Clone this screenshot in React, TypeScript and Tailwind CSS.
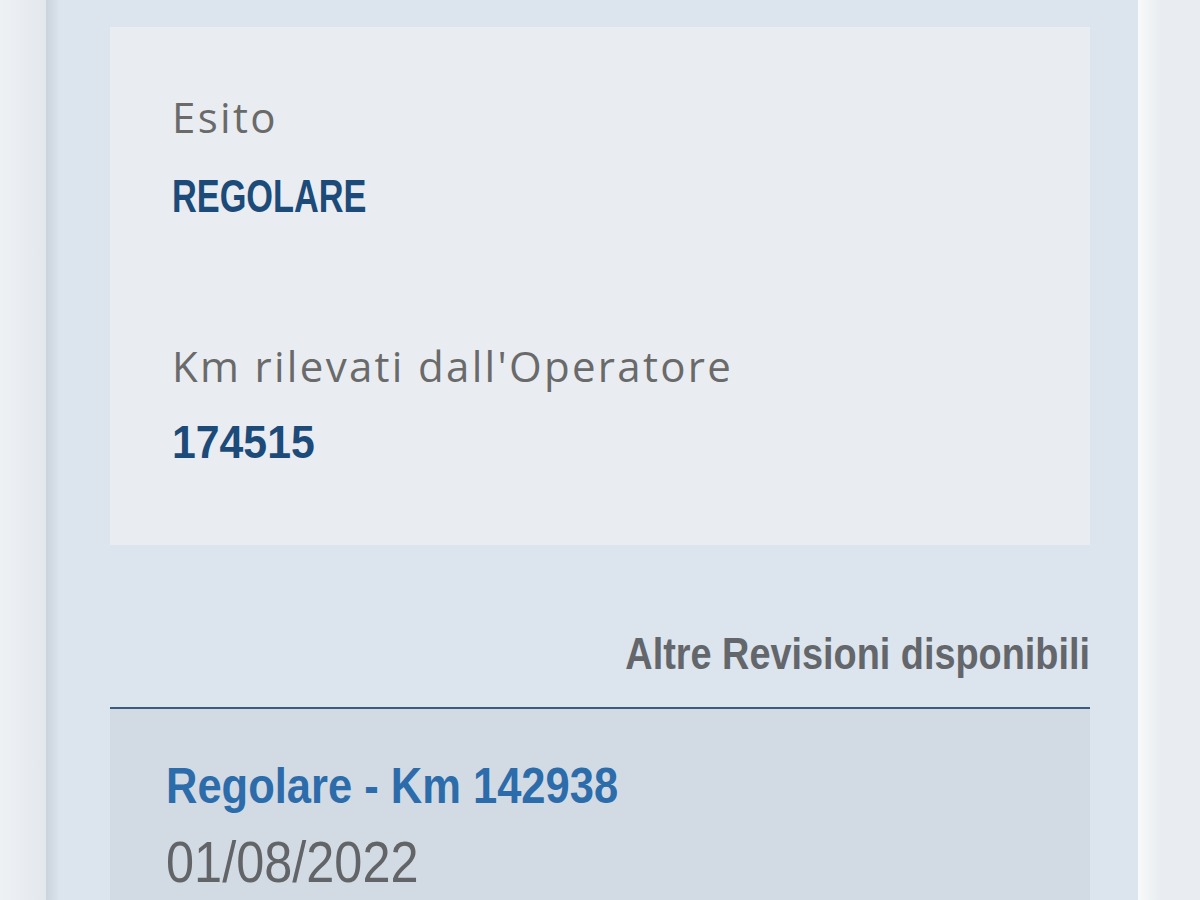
import React from 'react';

// condensed look: Liberation Sans squeezed horizontally
const narrow = { fontFamily: '"Liberation Sans", Arial, sans-serif' };
const sans = { fontFamily: '"Open Sans", "Noto Sans", sans-serif' };

const App: React.FC = () => {
    return (
        <div className="flex h-[900px] w-[1200px] overflow-hidden bg-[#e9edf1]">
            <div className="w-[46px] bg-gradient-to-r from-[#eef1f4] to-[#e3e8ed]" />
            <div className="w-[12px] bg-gradient-to-r from-[#cbd3dc] to-[#d9e1ea]" />
            <div className="flex w-[1080px] flex-col bg-[#dce4ed] pl-[52px] pr-[48px] pt-[27px]">
                <div className="h-[518px] bg-[#e9edf2] pl-[62px] pt-[66px]">
                    <div className="text-[42px] leading-[48px] tracking-[0.055em] text-[#6a6a6a]" style={sans}>Esito</div>
                    <div className="mt-[31px] origin-left scale-x-73 text-[47px] leading-[48px] font-bold text-[#1c4a79]" style={narrow}>
                        REGOLARE
                    </div>
                    <div className="mt-[122px] text-[42px] leading-[48px] tracking-[0.055em] text-[#6a6a6a]" style={sans}>
                        Km rilevati dall'Operatore
                    </div>
                    <div className="mt-[28px] origin-left scale-x-91 text-[47px] leading-[48px] font-bold text-[#1c4a79]" style={narrow}>
                        174515
                    </div>
                </div>
                <div className="mt-[85px] origin-right scale-x-86 text-right text-[44px] leading-[48px] font-bold text-[#63666a]" style={narrow}>
                    Altre Revisioni disponibili
                </div>
                <div className="mt-[29px] h-[2px] bg-[#3b5b80]" />
                <div className="flex-1 bg-[#d2dbe4] pl-[56px] pt-[49px]">
                    <div className="origin-left scale-x-87 text-[50px] leading-[56px] font-bold text-[#2c6cab]" style={narrow}>
                        Regolare - Km 142938
                    </div>
                    <div className="mt-[19px] origin-left scale-x-87 text-[58px] leading-[58px] text-[#626468]" style={narrow}>
                        01/08/2022
                    </div>
                </div>
            </div>
            <div className="w-[22px] bg-gradient-to-r from-[#f8f9fa] to-[#e9edf1]" />
            <div className="flex-1 bg-[#e9edf1]" />
        </div>
    );
};

export default App;
